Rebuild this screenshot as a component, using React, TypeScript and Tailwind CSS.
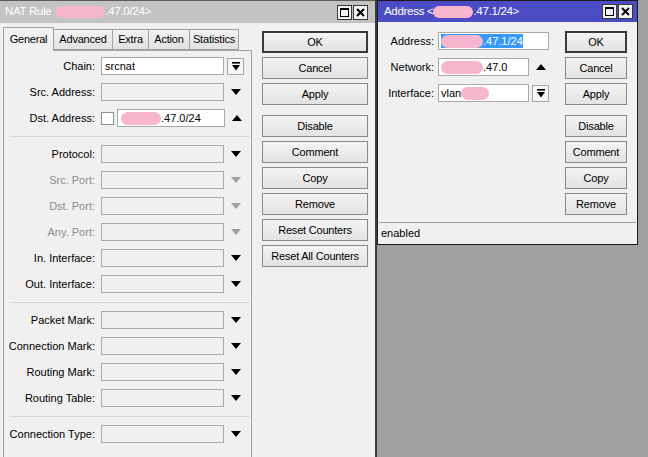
import React from 'react';

const Blob = ({ w, h = 12, className = '' }: { w: number; h?: number; className?: string }) => (
  <span
    className={`inline-block rounded-full bg-[#f7b6cd] align-middle ${className}`}
    style={{ width: w, height: h }}
  />
);

const Arrow = ({ up, disabled }: { up?: boolean; disabled?: boolean }) => (
  <svg width="10" height="6" viewBox="0 0 10 6">
    <polygon
      points={up ? '0,6 10,6 5,0' : '0,0 10,0 5,6'}
      fill={disabled ? '#a0a0a0' : '#000'}
    />
  </svg>
);

const DropBtn = () => (
  <div className="flex h-[17px] w-[17px] items-center justify-center border border-[#a6a6a6] bg-[#f7f7f7]">
    <svg width="8" height="9" viewBox="0 0 8 9">
      <rect x="0" y="0" width="8" height="1.6" fill="#000" />
      <polygon points="0,3 8,3 4,8.5" fill="#000" />
    </svg>
  </div>
);

const TitleButtons = () => (
  <div className="ml-auto flex gap-[1px]">
    <div className="flex h-[15px] w-[15px] items-center justify-center border border-[#3a3a3a] bg-[#f2f2f2]">
      <svg width="9" height="9" viewBox="0 0 9 9">
        <rect x="0.5" y="0.5" width="8" height="8" fill="none" stroke="#000" strokeWidth="1" />
        <rect x="0" y="0" width="9" height="2" fill="#000" />
      </svg>
    </div>
    <div className="flex h-[15px] w-[15px] items-center justify-center border border-[#3a3a3a] bg-[#f2f2f2]">
      <svg width="9" height="9" viewBox="0 0 9 9">
        <path d="M1 1 L8 8 M8 1 L1 8" stroke="#000" strokeWidth="2" />
      </svg>
    </div>
  </div>
);

const Btn = ({ label, primary, className = '' }: { label: string; primary?: boolean; className?: string }) => (
  <div
    className={`flex h-[22px] items-center justify-center bg-gradient-to-b from-[#f4f4f4] to-[#e2e2e2] tracking-[-0.2px] ${
      primary ? 'border-2 border-[#3a3a3a]' : 'border border-[#8a8a8a]'
    } ${className}`}
  >
    {label}
  </div>
);

type Row = {
  label: string;
  kind: 'drop' | 'down' | 'up' | 'none';
  disabled?: boolean;
  value?: React.ReactNode;
  white?: boolean;
  check?: boolean;
};

const FieldRow = ({ row }: { row: Row }) => (
  <div className="flex h-[26px] items-center">
    <div className={`w-[92px] pr-[1px] text-right ${row.disabled ? 'text-[#8d8d8d]' : ''}`}>{row.label}</div>
    {row.check && <div className="ml-[5px] h-[13px] w-[13px] border border-[#8e8f8f] bg-white" />}
    <div
      className={`flex h-[18px] items-center border border-[#a9a9a9] pl-[3px] ${
        row.check ? 'ml-[3px] w-[108px]' : 'ml-[5px] w-[123px]'
      } ${row.white ? 'bg-white' : 'bg-[#f0f0f0]'}`}
    >
      {row.value}
    </div>
    <div className="ml-[3px] flex w-[17px] items-center justify-center">
      {row.kind === 'drop' && <DropBtn />}
      {row.kind === 'down' && <Arrow disabled={row.disabled} />}
      {row.kind === 'up' && <Arrow up />}
    </div>
  </div>
);

const Sep = () => <div className="mb-[4px] ml-[6px] mr-[1px] mt-[5px] h-[1px] bg-[#d9d9d9]" />;

const tabs = ['General', 'Advanced', 'Extra', 'Action', 'Statistics'];
const tabW = [51, 60, 37, 42, 50];

export default function App() {
  return (
    <div className="flex h-[457px] w-[648px] overflow-hidden bg-[#a0a0a0] font-['Liberation_Sans',Arial,sans-serif] text-[11px] text-black">
      {/* NAT Rule window */}
      <div className="flex h-full w-[377px] shrink-0 flex-col border-r-2 border-[#3c3c3c] bg-[#f0f0f0]">
        <div className="flex h-[23px] items-center border-t border-[#5a5a5a] bg-[#c3c3c3] pl-[5px] pr-[7px] text-[11.5px] tracking-[-0.3px] text-white">
          <span>NAT Rule</span>
          <Blob w={50} className="ml-[4px]" />
          <span>.47.0/24&gt;</span>
          <TitleButtons />
        </div>
        <div className="flex flex-1">
          <div className="ml-[3px] mt-[3px] flex w-[249px] flex-col">
            <div className="flex h-[24px] items-end tracking-[-0.2px]">
              {tabs.map((t, i) => (
                <div
                  key={t}
                  style={{ width: tabW[i] }}
                  className={
                    i === 0
                      ? 'relative z-10 -mb-[1px] flex h-[24px] items-center justify-center border border-b-0 border-[#a0a0a0] bg-[#f0f0f0]'
                      : '-ml-[1px] flex h-[21px] items-center justify-center border border-[#a0a0a0] bg-gradient-to-b from-[#f2f2f2] to-[#e1e1e1]'
                  }
                >
                  {t}
                </div>
              ))}
            </div>
            <div className="flex-1 border border-b-0 border-[#a0a0a0] pt-[2px]">
              <FieldRow row={{ label: 'Chain:', kind: 'drop', white: true, value: 'srcnat' }} />
              <FieldRow row={{ label: 'Src. Address:', kind: 'down' }} />
              <FieldRow
                row={{
                  label: 'Dst. Address:',
                  kind: 'up',
                  white: true,
                  check: true,
                  value: (
                    <span className="flex items-center">
                      <Blob w={40} h={13} />
                      <span>.47.0/24</span>
                    </span>
                  ),
                }}
              />
              <Sep />
              <FieldRow row={{ label: 'Protocol:', kind: 'down' }} />
              <FieldRow row={{ label: 'Src. Port:', kind: 'down', disabled: true }} />
              <FieldRow row={{ label: 'Dst. Port:', kind: 'down', disabled: true }} />
              <FieldRow row={{ label: 'Any. Port:', kind: 'down', disabled: true }} />
              <FieldRow row={{ label: 'In. Interface:', kind: 'down' }} />
              <FieldRow row={{ label: 'Out. Interface:', kind: 'down' }} />
              <Sep />
              <FieldRow row={{ label: 'Packet Mark:', kind: 'down' }} />
              <FieldRow row={{ label: 'Connection Mark:', kind: 'down' }} />
              <FieldRow row={{ label: 'Routing Mark:', kind: 'down' }} />
              <FieldRow row={{ label: 'Routing Table:', kind: 'down' }} />
              <Sep />
              <FieldRow row={{ label: 'Connection Type:', kind: 'down' }} />
            </div>
          </div>
          <div className="ml-[10px] mt-[8px] flex w-[106px] flex-col gap-[4px]">
            <Btn label="OK" primary />
            <Btn label="Cancel" />
            <Btn label="Apply" />
            <Btn label="Disable" className="mt-[6px]" />
            <Btn label="Comment" />
            <Btn label="Copy" />
            <Btn label="Remove" />
            <Btn label="Reset Counters" />
            <Btn label="Reset All Counters" />
          </div>
        </div>
      </div>

      {/* Address window */}
      <div className="flex h-[245px] w-[261px] shrink-0 flex-col border border-[#1a1a1a] bg-[#f0f0f0]">
        <div className="flex h-[21px] items-center bg-[#4b4bc6] pl-[6px] pr-[4px] text-[11.5px] tracking-[-0.3px] text-white">
          <span>Address &lt;</span>
          <Blob w={40} />
          <span>.47.1/24&gt;</span>
          <TitleButtons />
        </div>
        <div className="flex flex-1">
          <div className="flex flex-col pt-[6px]">
            <div className="flex h-[26px] items-center">
              <div className="w-[56px] text-right">Address:</div>
              <div className="ml-[4px] flex h-[18px] w-[111px] items-center border border-[#a9a9a9] bg-white pl-[2px]">
                <span className="flex h-[14px] items-center bg-[#3399ff] text-white">
                  <Blob w={42} h={13} />
                  <span>.47.1/24</span>
                </span>
              </div>
            </div>
            <div className="flex h-[26px] items-center">
              <div className="w-[56px] text-right">Network:</div>
              <div className="ml-[4px] flex h-[18px] w-[91px] items-center border border-[#a9a9a9] bg-white pl-[2px]">
                <Blob w={42} h={13} />
                <span>.47.0</span>
              </div>
              <div className="ml-[3px] flex w-[17px] justify-center">
                <Arrow up />
              </div>
            </div>
            <div className="flex h-[26px] items-center">
              <div className="w-[56px] text-right">Interface:</div>
              <div className="ml-[4px] flex h-[18px] w-[91px] items-center border border-[#a9a9a9] bg-white pl-[2px]">
                <span>vlan</span>
                <Blob w={28} h={13} />
              </div>
              <div className="ml-[3px]">
                <DropBtn />
              </div>
            </div>
          </div>
          <div className="ml-auto mr-[10px] mt-[9px] flex w-[62px] flex-col gap-[4px]">
            <Btn label="OK" primary />
            <Btn label="Cancel" />
            <Btn label="Apply" />
            <Btn label="Disable" className="mt-[6px]" />
            <Btn label="Comment" />
            <Btn label="Copy" />
            <Btn label="Remove" />
          </div>
        </div>
        <div className="mx-[1px] flex h-[22px] items-center border-t border-[#a0a0a0] pl-[2px]">enabled</div>
      </div>
    </div>
  );
}
